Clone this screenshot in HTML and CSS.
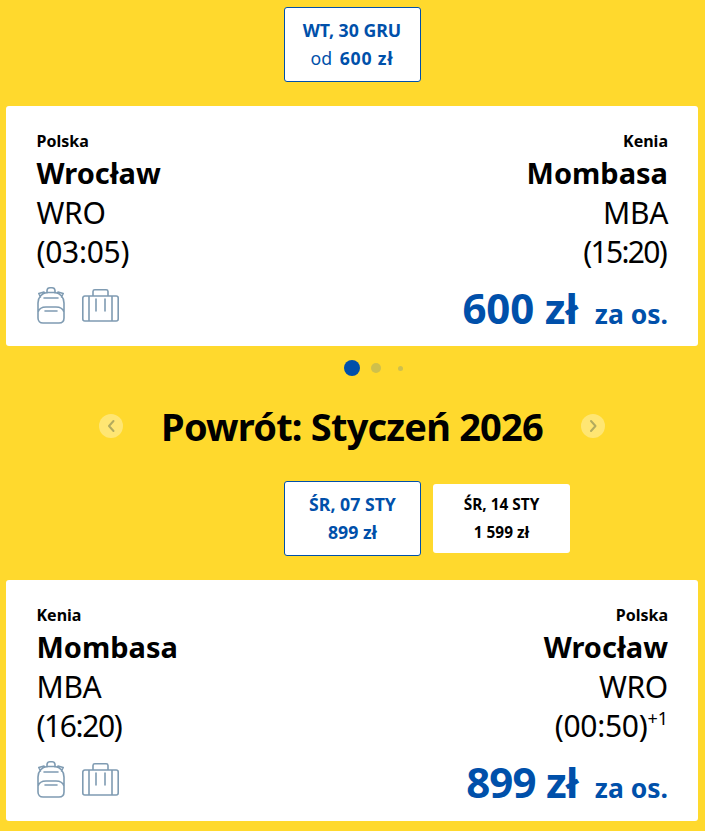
FILE: index.html
```html
<!DOCTYPE html>
<html lang="pl">
<head>
<meta charset="utf-8">
<title>Loty</title>
<link rel="stylesheet" href="styles.css">
</head>
<body>
<div class="days days-first">
  <div class="day selected"><div class="day-date">WT, 30 GRU</div><div class="day-price"><span class="from">od</span> <span class="from-value">600 zł</span></div></div>
</div>
<section class="card">
  <div class="route">
    <div class="end"><div class="country">Polska</div><div class="city">Wrocław</div><div class="code">WRO</div><div class="time">(03:05)</div></div>
    <div class="end right"><div class="country">Kenia</div><div class="city">Mombasa</div><div class="code">MBA</div><div class="time time-tight">(15:20)</div></div>
  </div>
  <div class="bottom">
    <div class="bags">
      <svg class="bag" width="28" height="37" viewBox="0 0 28 37" fill="none"><path d="M10 6V3.500a3 3 0 0 1 3-2.700h2a3 3 0 0 1 3 2.700V6M3.500 10 1.800 6.500 7 5M24.500 10l1.700-3.500L21 5M1 16C1 10 5 6 10 5.500h8c5 .5 9 4.500 9 10.500v15c0 3-2 5-5 5H6c-3 0-5-2-5-5zM7 11h14M1 25c1-3 4-5 8-5h10c4 0 7 2 8 5M8 24h12"/></svg>
      <svg class="bag case" width="37" height="33" viewBox="0 0 37 33" fill="none"><path d="M11 7V2.500A1.800 1.800 0 0 1 12.800.800h11.400A1.800 1.800 0 0 1 26 2.500V7M2.800 7h31.400a2 2 0 0 1 2 2v21a2 2 0 0 1-2 2H2.800a2 2 0 0 1-2-2V9a2 2 0 0 1 2-2zM7 7v25M30 7v25M14 10v12M23 10v12"/></svg>
    </div>
    <div class="price"><span class="amount">600 zł</span><span class="per">za os.</span></div>
  </div>
</section>
<div class="dots"><span class="dot dot-on"></span><span class="dot dot-mid"></span><span class="dot dot-small"></span></div>
<div class="month">
  <span class="arrow"><svg width="10" height="14" viewBox="0 0 10 14" fill="none"><path d="M7.500 2 3 7l4.500 5"/></svg></span>
  <h2 class="month-title">Powrót: Styczeń 2026</h2>
  <span class="arrow"><svg width="10" height="14" viewBox="0 0 10 14" fill="none"><path d="M3 2l4.500 5L3 12"/></svg></span>
</div>
<div class="days days-second">
  <div class="day selected"><div class="day-date">ŚR, 07 STY</div><div class="day-price">899 zł</div></div>
  <div class="day plain"><div class="day-date">ŚR, 14 STY</div><div class="day-price">1 599 zł</div></div>
</div>
<section class="card card-last">
  <div class="route">
    <div class="end"><div class="country">Kenia</div><div class="city">Mombasa</div><div class="code">MBA</div><div class="time time-tight">(16:20)</div></div>
    <div class="end right"><div class="country">Polska</div><div class="city">Wrocław</div><div class="code">WRO</div><div class="time">(00:50)<sup class="plus">+1</sup></div></div>
  </div>
  <div class="bottom">
    <div class="bags">
      <svg class="bag" width="28" height="37" viewBox="0 0 28 37" fill="none"><path d="M10 6V3.500a3 3 0 0 1 3-2.700h2a3 3 0 0 1 3 2.700V6M3.500 10 1.800 6.500 7 5M24.500 10l1.700-3.500L21 5M1 16C1 10 5 6 10 5.500h8c5 .5 9 4.500 9 10.500v15c0 3-2 5-5 5H6c-3 0-5-2-5-5zM7 11h14M1 25c1-3 4-5 8-5h10c4 0 7 2 8 5M8 24h12"/></svg>
      <svg class="bag case" width="37" height="33" viewBox="0 0 37 33" fill="none"><path d="M11 7V2.500A1.800 1.800 0 0 1 12.800.800h11.400A1.800 1.800 0 0 1 26 2.500V7M2.800 7h31.400a2 2 0 0 1 2 2v21a2 2 0 0 1-2 2H2.800a2 2 0 0 1-2-2V9a2 2 0 0 1 2-2zM7 7v25M30 7v25M14 10v12M23 10v12"/></svg>
    </div>
    <div class="price"><span class="amount amount-tight">899 zł</span><span class="per">za os.</span></div>
  </div>
</section>
</body>
</html>
```
FILE: styles.css
```css
* { box-sizing: border-box; }
html, body { margin: 0; padding: 0; }
body {
  width: 705px;
  height: 831px;
  overflow: hidden;
  background: #ffd92d;
  color: #000;
  font-family: "Noto Sans", sans-serif;
  padding: 7px 7px 0 6px;
}
.days { display: flex; align-items: center; gap: 12px; height: 75px; margin-bottom: 24px; }
.days-first { justify-content: center; }
.days-second { margin-left: 278px; }
.day {
  width: 137px;
  border-radius: 3px;
  background: #fff;
  text-align: center;
  font-weight: 700;
}
.selected { height: 75px; border: 1px solid #0050aa; color: #0050aa; font-size: 17.7px; padding-top: 8px; }
.selected .day-date, .selected .day-price { height: 28px; line-height: 28px; }
.plain { height: 69px; font-size: 15.4px; padding-top: 7px; }
.plain .day-date { height: 28px; line-height: 27px; }
.plain .day-price { height: 27px; line-height: 27px; }
.from { font-weight: 400; margin-right: 3px; }
.from-value { letter-spacing: 0.8px; }
.card {
  height: 240px;
  background: #fff;
  border-radius: 3px;
  padding: 25px 30px 0 30.5px;
}
.card-last { height: 241px; }
.route { display: flex; justify-content: space-between; height: 140px; }
.right { text-align: right; }
.country { font-size: 16px; font-weight: 700; line-height: 21px; }
.city { font-size: 29px; font-weight: 700; line-height: 40px; margin-top: 1px; }
.code { font-size: 30px; line-height: 39px; letter-spacing: -0.3px; }
.time { font-size: 30px; line-height: 39px; letter-spacing: -0.3px; }
.time-tight { letter-spacing: -1.4px; }
.right .time-tight { letter-spacing: -1.7px; padding-right: 2px; }
.plus { font-size: 18px; line-height: 0; letter-spacing: 0; vertical-align: 12px; }
.bottom { display: flex; justify-content: space-between; align-items: flex-start; height: 69px; }
.bags { display: flex; gap: 17px; align-items: flex-start; padding-top: 16px; padding-left: 0.5px; }
.case { margin-top: 2px; }
.bag path { stroke: #7f9bb2; stroke-width: 1.6; stroke-linejoin: round; stroke-linecap: round; }
.price { color: #0050aa; font-weight: 700; display: flex; align-items: baseline; gap: 17px; padding-top: 9px; }
.amount { font-size: 42px; line-height: 56px; letter-spacing: -0.2px; }
.amount-tight { letter-spacing: -0.8px; }
.per { font-size: 26.5px; }
.dots { height: 44px; display: flex; align-items: center; justify-content: center; padding-left: 43px; }
.dot { border-radius: 50%; display: block; }
.dot-on { width: 16px; height: 16px; background: #0050aa; }
.dot-mid { width: 10px; height: 10px; background: #cfc04c; margin-left: 11px; }
.dot-small { width: 5px; height: 5px; background: #cfc04c; margin-left: 17px; }
.month { height: 72px; margin-bottom: 19px; display: flex; align-items: center; justify-content: center; gap: 38px; }
.month-title { margin: 0; font-size: 38px; line-height: 48px; font-weight: 700; letter-spacing: -0.8px; }
.arrow { width: 24px; height: 24px; border-radius: 50%; background: #ffe673; display: flex; align-items: center; justify-content: center; }
.arrow path { stroke: #b3ab5e; stroke-width: 2; stroke-linecap: round; stroke-linejoin: round; }
```
